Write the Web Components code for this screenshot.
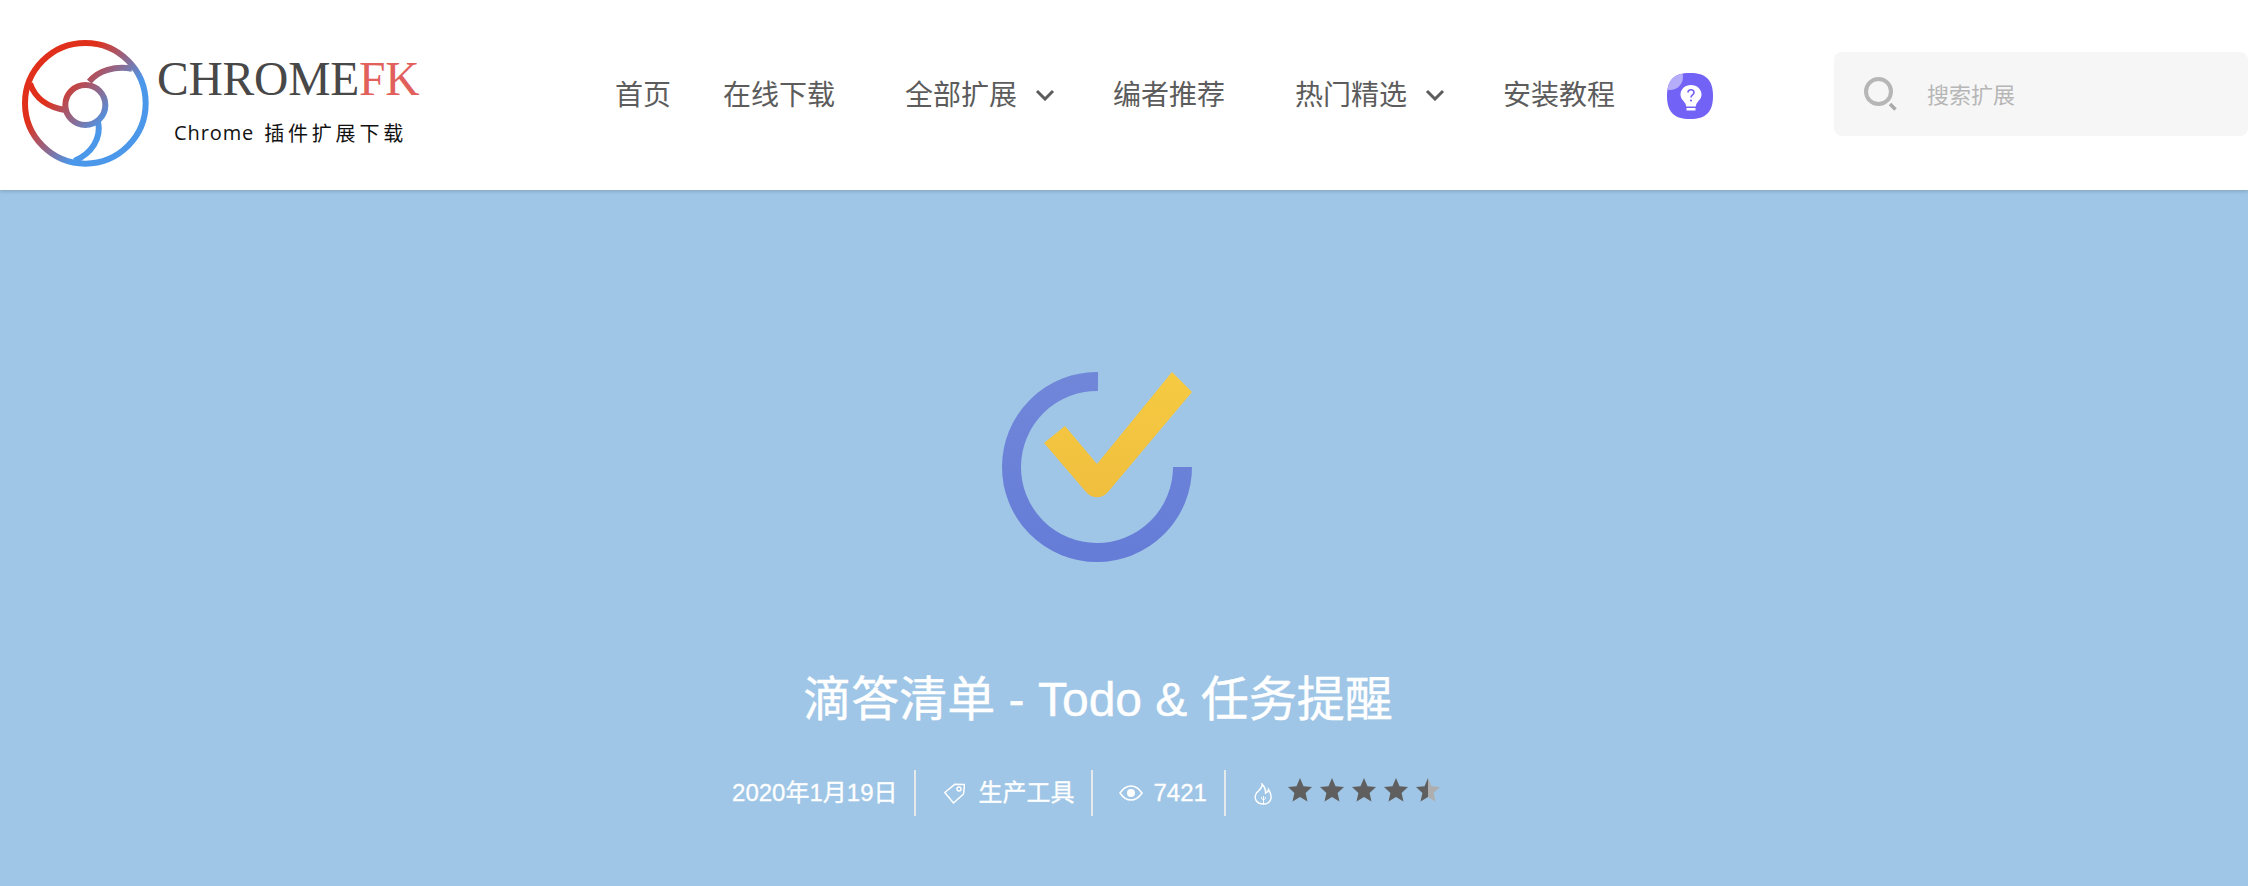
<!DOCTYPE html>
<html lang="zh">
<head>
<meta charset="utf-8">
<title>滴答清单 - Todo & 任务提醒</title>
<style>
    html, body { margin: 0; height: 100%; overflow: hidden; }
    body {
        display: flex;
        flex-direction: column;
        font-family: "Liberation Sans", "Noto Sans CJK SC", sans-serif;
    }
</style>
</head>
<body>
<site-header>
    <site-logo slot="logo"></site-logo>
    <nav-item style="margin-right: 2px">首页</nav-item>
    <nav-item>在线下载</nav-item>
    <nav-item dropdown>全部扩展</nav-item>
    <nav-item>编者推荐</nav-item>
    <nav-item dropdown>热门精选</nav-item>
    <nav-item>安装教程</nav-item>
    <help-bulb></help-bulb>
    <search-box slot="search" placeholder="搜索扩展"></search-box>
</site-header>
<hero-banner>
    <span slot="title">滴答清单 - Todo &amp; 任务提醒</span>
    <meta-row></meta-row>
</hero-banner>
<script>
window.customElements.define('site-logo', class SiteLogo extends HTMLElement {
    constructor() {
        super();
        this.attachShadow({ mode: 'open' });
        this.shadowRoot.innerHTML = `
            <style>
                :host { display: flex; align-items: flex-start; }
                svg { display: block; width: 150px; height: 150px; flex: none; }
                .words { display: flex; flex-direction: column; margin: 22px 0 0 -3px; }
                .name {
                    font: 400 47.5px/54px "Liberation Serif", serif;
                    color: #484848;
                    letter-spacing: -.2px;
                    white-space: nowrap;
                }
                .name b { font-weight: 400; color: #e2605c; }
                .sub {
                    display: flex;
                    align-items: center;
                    font: 400 20px/24px "Noto Sans CJK SC", sans-serif;
                    color: #111;
                    margin: 15px 0 0 17px;
                    letter-spacing: 3.8px;
                    white-space: nowrap;
                }
                .sub span { font: 500 20px/24px "Open Sans", sans-serif; letter-spacing: .9px; margin-right: 10px; }
            </style>
            <svg viewBox="0 0 450 450" fill="none">
                <defs>
                    <linearGradient id="lg" gradientUnits="userSpaceOnUse" x1="70" y1="90" x2="370" y2="350">
                        <stop offset=".28" stop-color="#e0301c"/>
                        <stop offset=".72" stop-color="#4b97ea"/>
                    </linearGradient>
                </defs>
                <g stroke="url(#lg)" stroke-width="18">
                    <circle cx="226" cy="220" r="181"/>
                    <circle cx="226" cy="225" r="60"/>
                    <path d="M238 155C265 120 315 108 366 116"/>
                    <path d="M264 275C275 325 245 370 193 393"/>
                    <path d="M166 240C115 232 75 205 60 160"/>
                </g>
            </svg>
            <div class="words">
                <div class="name">CHROME<b>FK</b></div>
                <div class="sub"><span>Chrome</span>插件扩展下载</div>
            </div>
        `;
    }
});

window.customElements.define('nav-item', class NavItem extends HTMLElement {
    constructor() {
        super();
        this.attachShadow({ mode: 'open' });
        this.shadowRoot.innerHTML = `
            <style>
                :host {
                    display: flex;
                    align-items: center;
                    gap: 18px;
                    font: 400 28px/40px "Noto Sans CJK SC", sans-serif;
                    color: #5c5c5c;
                    white-space: nowrap;
                }
                :host([dropdown]) { margin-left: 20px; margin-right: 8px; }
                svg { display: none; width: 20px; height: 12px; margin-top: 4px; }
                :host([dropdown]) svg { display: block; }
            </style>
            <slot></slot>
            <svg viewBox="0 0 20 12" fill="none" stroke="#5c5c5c" stroke-width="3">
                <path d="M2 2l8 8 8-8"/>
            </svg>
        `;
    }
});

window.customElements.define('help-bulb', class HelpBulb extends HTMLElement {
    constructor() {
        super();
        this.attachShadow({ mode: 'open' });
        this.shadowRoot.innerHTML = `
            <style>
                :host { display: block; width: 46px; height: 46px; margin: 6px 0 0 2px; }
                svg { display: block; width: 46px; height: 46px; }
            </style>
            <svg viewBox="0 0 46 46">
                <defs>
                    <clipPath id="sq"><path d="M23 0C39 0 46 7 46 23S39 46 23 46 0 39 0 23 7 0 23 0Z"/></clipPath>
                </defs>
                <path d="M23 0C39 0 46 7 46 23S39 46 23 46 0 39 0 23 7 0 23 0Z" fill="#7362f6"/>
                <circle cx="3" cy="4" r="13" fill="#b5acfa" clip-path="url(#sq)"/>
                <path d="M24 12c-6 0-10.500 4.200-10.500 9.500 0 3.800 2.500 5.800 4.500 8.500.800 1.100 1 2.300 1.200 3.500h9.600c.2-1.200.4-2.400 1.200-3.500 2-2.700 4.500-4.700 4.500-8.500C34.500 16.200 30 12 24 12Z" fill="#fff"/>
                <path d="M19.500 35h9v2.500h-9z" fill="#fff"/>
                <path d="M21 19.500c0-3.600 6-3.600 6 0 0 2.400-3 2.400-3 5" fill="none" stroke="#7362f6" stroke-width="1.600"/>
                <circle cx="24" cy="27.500" r="1.100" fill="#7362f6"/>
            </svg>
        `;
    }
});

window.customElements.define('search-box', class SearchBox extends HTMLElement {
    constructor() {
        super();
        this.attachShadow({ mode: 'open' });
        this.shadowRoot.innerHTML = `
            <style>
                :host {
                    display: flex;
                    align-items: center;
                    gap: 29px;
                    width: 414px;
                    height: 84px;
                    box-sizing: border-box;
                    padding-left: 30px;
                    background: #f6f6f6;
                    border-radius: 8px;
                    font: 400 22px/30px "Noto Sans CJK SC", sans-serif;
                    color: #b6b6b6;
                }
                svg { display: block; width: 34px; height: 34px; flex: none; }
                span { margin-top: -2px; }
            </style>
            <svg viewBox="0 0 34 34" fill="none" stroke="#b6b6b6">
                <circle cx="14.500" cy="14.500" r="12.500" stroke-width="4"/>
                <path d="M26 27l5.500 5.500" stroke-width="3.500" stroke="#aaa"/>
            </svg>
            <span>${this.getAttribute('placeholder')}</span>
        `;
    }
});

window.customElements.define('site-header', class SiteHeader extends HTMLElement {
    constructor() {
        super();
        this.attachShadow({ mode: 'open' });
        this.shadowRoot.innerHTML = `
            <style>
                :host {
                    display: flex;
                    align-items: center;
                    flex: none;
                    height: 190px;
                    background: #fff;
                    box-shadow: 0 1px 4px rgba(0, 0, 0, .2);
                    position: relative;
                    z-index: 1;
                }
                .logo { width: 615px; flex: none; height: 150px; padding-left: 10px; box-sizing: border-box; margin-top: 20px; }
                nav { display: flex; align-items: center; gap: 50px; width: 1219px; flex: none; margin-top: -4px; }
                .search { flex: none; margin-top: -2px; }
            </style>
            <div class="logo"><slot name="logo"></slot></div>
            <nav><slot></slot></nav>
            <div class="search"><slot name="search"></slot></div>
        `;
    }
});

window.customElements.define('meta-row', class MetaRow extends HTMLElement {
    constructor() {
        super();
        const star = (cls) => `<svg class="star" viewBox="0 0 24 24"><path class="${cls}" d="M12 0l3.500 8.300 8.500.800-6.400 5.800 1.900 8.600L12 19l-7.500 4.500 1.900-8.600L0 9.100l8.500-.800z"/></svg>`;
        this.attachShadow({ mode: 'open' });
        this.shadowRoot.innerHTML = `
            <style>
                :host {
                    display: flex;
                    align-items: center;
                    height: 46px;
                    font: 400 24px/46px "Liberation Sans", "Noto Sans CJK SC", sans-serif;
                    -webkit-text-stroke: .3px #fff;
                    color: #fff;
                    white-space: nowrap;
                }
                .cell { display: flex; align-items: center; height: 46px; padding: 0 16px 0 0; }
                .cell:first-child { padding-right: 18px; }
                .cell + .cell { border-left: 2px solid #e6e9ea; padding-left: 28px; }
                .cell.views { padding-left: 26px; padding-right: 17px; }
                .cell svg { display: block; flex: none; }
                .tag { width: 21px; height: 21px; margin-right: 14px; }
                .eye { width: 24px; height: 16px; margin-right: 11px; }
                .fire { width: 20px; height: 22px; margin: 2px 14px 0 0; }
                .stars { display: flex; gap: 8px; }
                .star { width: 24px; height: 24px; margin-top: -6px; }
                .on { fill: #5f5f5f; }
                .half { fill: url(#hf); }
            </style>
            <div class="cell">2020年1月19日</div>
            <div class="cell">
                <svg class="tag" viewBox="0 0 21 21" fill="none" stroke="#fff" stroke-width="1.500">
                    <path d="M.8 9.500L11 1.200l9.500.3-1 9.500L9.500 20Z" stroke-linejoin="round"/>
                    <circle cx="15" cy="6" r="2"/>
                </svg>
                生产工具
            </div>
            <div class="cell views">
                <svg class="eye" viewBox="0 0 24 16" fill="none" stroke="#fff" stroke-width="1.500">
                    <path d="M1 8c3-4.500 7-7 11-7s8 2.500 11 7c-3 4.500-7 7-11 7S4 12.500 1 8Z"/>
                    <circle cx="12" cy="8" r="4" fill="#fff" stroke="none"/>
                </svg>
                7421
            </div>
            <div class="cell">
                <svg class="fire" viewBox="0 0 20 22" fill="none" stroke="#fff" stroke-width="1.400">
                    <path d="M8 1C9 5 5 7 2.500 10-1 16 3 21 9.500 21 16 21 20 15 14.500 6.500 14.500 8.500 13 9.500 11.500 10 12 6 10 3 8 1Z"/>
                    <path d="M9.500 21v-8M9.500 17c-1.500-.5-2-1.500-2-3M9.500 17c1.500-.5 2-1.500 2-3" stroke-width=".900"/>
                </svg>
                <div class="stars">
                    <svg width="0" height="0" style="position:absolute">
                        <defs><linearGradient id="hf"><stop offset=".5" stop-color="#5f5f5f"/><stop offset=".5" stop-color="#aeaeae"/></linearGradient></defs>
                    </svg>
                    ${star('on')}${star('on')}${star('on')}${star('on')}${star('half')}
                </div>
            </div>
        `;
    }
});

window.customElements.define('hero-banner', class HeroBanner extends HTMLElement {
    constructor() {
        super();
        this.attachShadow({ mode: 'open' });
        this.shadowRoot.innerHTML = `
            <style>
                :host {
                    display: flex;
                    flex-direction: column;
                    align-items: center;
                    flex: 1;
                    background: #9fc6e6;
                    padding-right: 54px;
                }
                svg { display: block; width: 190px; height: 190px; margin-top: 182px; }
                .title {
                    font: 400 48px/68px "Liberation Sans", "Noto Sans CJK SC", sans-serif;
                    -webkit-text-stroke: .4px #fff;
                    color: #fff;
                    margin: 104px 0 0 2px;
                    white-space: nowrap;
                }
                .meta { margin: 36px 0 0 -6px; }
            </style>
            <svg viewBox="0 0 190 190" fill="none">
                <defs>
                    <linearGradient id="ring" x1="0" y1="0" x2="0" y2="1">
                        <stop offset="0" stop-color="#7086d9"/><stop offset="1" stop-color="#667dd8"/>
                    </linearGradient>
                    <linearGradient id="tick" x1="0" y1="0" x2="0" y2="1">
                        <stop offset="0" stop-color="#f6ca42"/><stop offset="1" stop-color="#f0bf3e"/>
                    </linearGradient>
                </defs>
                <path d="M96 9.500A85.500 85.500 0 1 0 180.500 95" stroke="url(#ring)" stroke-width="19"/>
                <path d="M42 71L63 54 95 92 170 0l20 20-84 100c-6 7-16 7-22 0Z" fill="url(#tick)"/>
            </svg>
            <div class="title"><slot name="title"></slot></div>
            <div class="meta"><slot></slot></div>
        `;
    }
});
</script>
</body>
</html>
